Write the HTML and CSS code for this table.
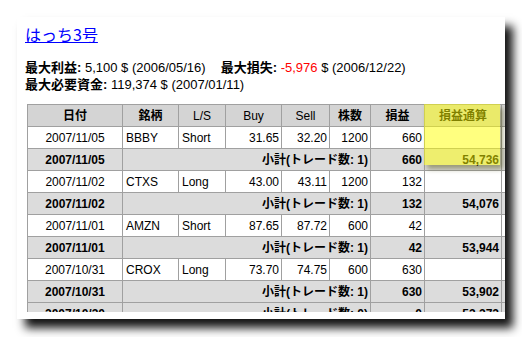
FILE: index.html
```html
<!DOCTYPE html>
<html lang="ja">
<head>
<meta charset="utf-8">
<link rel="stylesheet" href="styles.css">
</head>
<body>
<div class="page">
  <h1 class="title"><a href="#">はっち3号</a></h1>
  <div class="stats">
    <div><b>最大利益:</b> 5,100 $ (2006/05/16)<span class="gap"></span><b>最大損失:</b> <span class="neg">-5,976</span> $ (2006/12/22)</div>
    <div><b>最大必要資金:</b> 119,374 $ (2007/01/11)</div>
  </div>
  <div class="table-wrap">
    <table class="trades">
      <colgroup>
        <col class="c-date"><col class="c-sym"><col class="c-ls"><col class="c-buy"><col class="c-sell"><col class="c-qty"><col class="c-pl"><col class="c-cum"><col class="c-extra">
      </colgroup>
      <thead>
        <tr><th class="jp">日付</th><th class="jp">銘柄</th><th>L/S</th><th>Buy</th><th>Sell</th><th class="jp">株数</th><th class="jp">損益</th><th class="jp">損益通算</th><th></th></tr>
      </thead>
      <tbody>
        <tr><td class="ctr">2007/11/05</td><td>BBBY</td><td>Short</td><td class="num">31.65</td><td class="num">32.20</td><td class="num">1200</td><td class="num">660</td><td class="num"></td><td></td></tr>
        <tr class="sub"><td class="ctr">2007/11/05</td><td class="num" colspan="5">小計(トレード数: 1)</td><td class="num">660</td><td class="num">54,736</td><td></td></tr>
        <tr><td class="ctr">2007/11/02</td><td>CTXS</td><td>Long</td><td class="num">43.00</td><td class="num">43.11</td><td class="num">1200</td><td class="num">132</td><td class="num"></td><td></td></tr>
        <tr class="sub"><td class="ctr">2007/11/02</td><td class="num" colspan="5">小計(トレード数: 1)</td><td class="num">132</td><td class="num">54,076</td><td></td></tr>
        <tr><td class="ctr">2007/11/01</td><td>AMZN</td><td>Short</td><td class="num">87.65</td><td class="num">87.72</td><td class="num">600</td><td class="num">42</td><td class="num"></td><td></td></tr>
        <tr class="sub"><td class="ctr">2007/11/01</td><td class="num" colspan="5">小計(トレード数: 1)</td><td class="num">42</td><td class="num">53,944</td><td></td></tr>
        <tr><td class="ctr">2007/10/31</td><td>CROX</td><td>Long</td><td class="num">73.70</td><td class="num">74.75</td><td class="num">600</td><td class="num">630</td><td class="num"></td><td></td></tr>
        <tr class="sub"><td class="ctr">2007/10/31</td><td class="num" colspan="5">小計(トレード数: 1)</td><td class="num">630</td><td class="num">53,902</td><td></td></tr>
        <tr class="sub"><td class="ctr">2007/10/30</td><td class="num" colspan="5">小計(トレード数: 0)</td><td class="num">0</td><td class="num">53,272</td><td></td></tr>
      </tbody>
    </table>
    <div class="highlight"></div>
  </div>
</div>
</body>
</html>
```
FILE: styles.css
```css
html, body {
  margin: 0;
  padding: 0;
  background: #fff;
  overflow: hidden;
}
body {
  width: 522px;
  height: 337px;
  font-family: "Liberation Sans", "Noto Sans CJK JP", sans-serif;
  color: #000;
}
.page {
  position: relative;
  width: 488px;
  height: 302px;
  margin: 17px 0 0 17px;
  padding: 6px 0 0 8px;
  box-sizing: border-box;
  background: #fff;
  overflow: hidden;
  box-shadow: 8px 9px 9px rgba(0, 0, 0, 0.92);
}
.title {
  margin: 0;
  font-size: 16px;
  line-height: 22px;
  font-weight: normal;
  font-family: "Noto Sans CJK JP", sans-serif;
}
.title a {
  color: #0000ff;
  text-decoration: underline;
}
.stats {
  margin-top: 14px;
  font-size: 13px;
  line-height: 17px;
}
.stats b {
  font-weight: bold;
}
.stats .gap {
  display: inline-block;
  width: 15px;
}
.stats .neg {
  color: #ff0000;
}
.table-wrap {
  position: relative;
  margin: 11px 0 0 2px;
  width: 540px;
  height: 208px;
  overflow: hidden;
}
.trades {
  border-collapse: collapse;
  table-layout: fixed;
  width: 514px;
  font-size: 12px;
  border: 1px solid #808080;
}
.c-date { width: 95px; }
.c-sym { width: 56px; }
.c-ls { width: 47px; }
.c-buy { width: 56px; }
.c-sell { width: 48px; }
.c-qty { width: 41px; }
.c-pl { width: 54px; }
.c-cum { width: 77px; }
.c-extra { width: 40px; }
.trades th,
.trades td {
  border: 1px solid #a0a0a0;
  height: 22px;
  padding: 0 3px;
  box-sizing: border-box;
  white-space: nowrap;
  overflow: hidden;
  line-height: 20px;
}
.trades th {
  background: #d4d4d4;
  font-weight: normal;
  text-align: center;
}
.trades th.jp {
  font-weight: bold;
}
.trades td {
  background: #fff;
  text-align: left;
}
.trades td.ctr {
  text-align: center;
}
.trades td.num {
  text-align: right;
  padding-right: 2px;
}
.trades tr.sub td {
  background: #dcdcdc;
  font-weight: bold;
}
.highlight {
  position: absolute;
  left: 397px;
  top: 0;
  width: 76px;
  height: 61px;
  background: rgba(255, 255, 0, 0.5);
  box-shadow: 3px 4px 5px rgba(70, 70, 0, 0.45);
}
```
